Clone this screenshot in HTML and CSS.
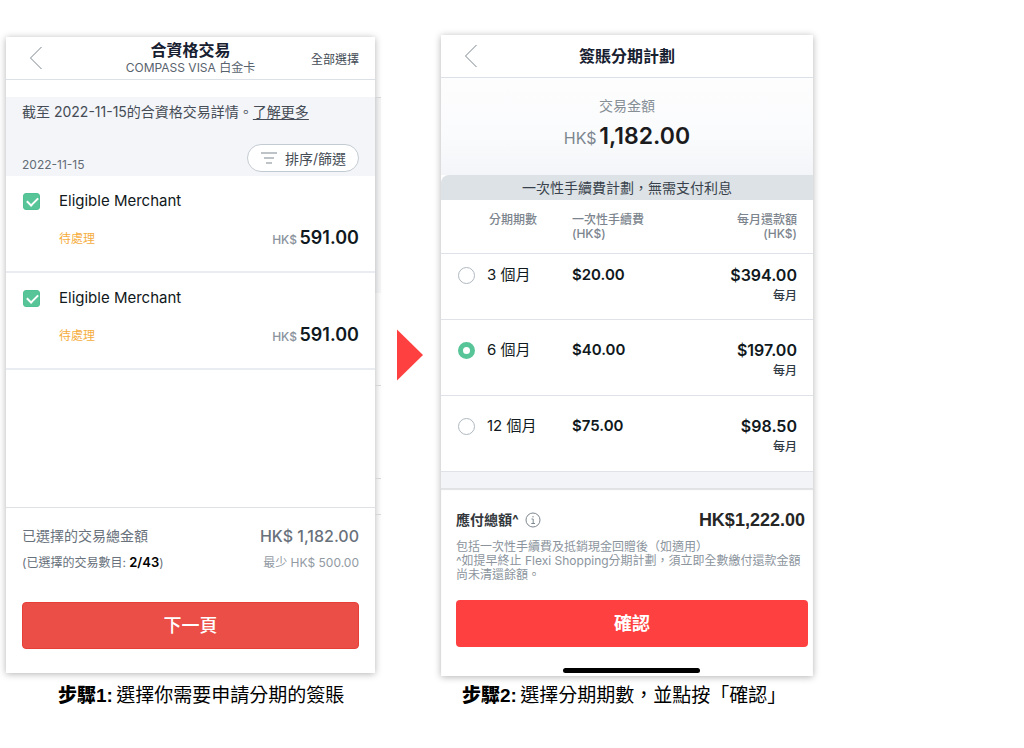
FILE: index.html
```
<!DOCTYPE html>
<html lang="zh-Hant">
<head>
  <meta charset="UTF-8">
  <meta name="viewport" content="width=device-width, initial-scale=1">
  <title>簽賬分期計劃</title>
  <link rel="stylesheet" href="styles.css">
</head>
<body>

<main class="steps">
  <figure class="step step-one">
    <section class="phone">
      <header class="topbar">
        <button class="back" type="button" aria-label="返回">
          <svg width="14" height="24" viewBox="0 0 14 24"><path d="M12.5 1 1.5 12l11 11" /></svg>
        </button>
        <div class="topbar-title">
          <h1>合資格交易</h1>
          <p>COMPASS VISA 白金卡</p>
        </div>
        <button class="select-all" type="button">全部選擇</button>
      </header>

      <div class="notice">
        <p>截至 2022-11-15的合資格交易詳情。<a href="#">了解更多</a></p>
        <div class="notice-row">
          <span class="date">2022-11-15</span>
          <button class="filter" type="button">
            <svg width="16" height="12" viewBox="0 0 16 12"><path d="M0 1h16M3 6h10M5 11h6" /></svg>
            排序/篩選
          </button>
        </div>
      </div>

      <ul class="merchants">
        <li>
          <input type="checkbox" id="m1" checked>
          <label for="m1">Eligible Merchant</label>
          <span class="status">待處理</span>
          <span class="amount"><small>HK$</small> 591.00</span>
        </li>
        <li>
          <input type="checkbox" id="m2" checked>
          <label for="m2">Eligible Merchant</label>
          <span class="status">待處理</span>
          <span class="amount"><small>HK$</small> 591.00</span>
        </li>
      </ul>

      <footer class="summary">
        <div class="summary-row total">
          <span>已選擇的交易總金額</span>
          <span class="total-value">HK$ 1,182.00</span>
        </div>
        <div class="summary-row minor">
          <span>(已選擇的交易數目: <b>2/43</b>)</span>
          <span class="minimum">最少 HK$ 500.00</span>
        </div>
        <button class="primary" type="button">下一頁</button>
      </footer>
    </section>
    <figcaption><b>步驟1:</b> 選擇你需要申請分期的簽賬</figcaption>
  </figure>

  <svg class="arrow" width="26" height="52" viewBox="0 0 26 52"><path d="M0 0.500 26 26 0 51.500z" /></svg>

  <figure class="step step-two">
    <section class="phone">
      <header class="topbar">
        <button class="back" type="button" aria-label="返回">
          <svg width="14" height="24" viewBox="0 0 14 24"><path d="M12.5 1 1.5 12l11 11" /></svg>
        </button>
        <div class="topbar-title">
          <h1>簽賬分期計劃</h1>
        </div>
      </header>

      <div class="transaction">
        <p>交易金額</p>
        <p class="transaction-value"><small>HK$</small> 1,182.00</p>
      </div>
      <p class="banner">一次性手續費計劃，無需支付利息</p>

      <table class="plans">
        <thead>
          <tr>
            <th class="term">分期期數</th>
            <th class="fee">一次性手續費<br>(HK$)</th>
            <th class="monthly">每月還款額<br>(HK$)</th>
          </tr>
        </thead>
        <tbody>
          <tr>
            <td><label><input type="radio" name="term">3 個月</label></td>
            <td class="money">$20.00</td>
            <td class="money">$394.00<small>每月</small></td>
          </tr>
          <tr>
            <td><label><input type="radio" name="term" checked>6 個月</label></td>
            <td class="money">$40.00</td>
            <td class="money">$197.00<small>每月</small></td>
          </tr>
          <tr>
            <td><label><input type="radio" name="term">12 個月</label></td>
            <td class="money">$75.00</td>
            <td class="money">$98.50<small>每月</small></td>
          </tr>
        </tbody>
      </table>

      <footer class="payable">
        <div class="payable-row">
          <span class="payable-label">應付總額^
            <svg width="16" height="16" viewBox="0 0 16 16"><circle cx="8" cy="8" r="7" /><path d="M6.500 7h1.700v4.500M6.300 11.500h3.700M8 4v1.400" /></svg>
          </span>
          <strong>HK$1,222.00</strong>
        </div>
        <p class="terms">包括一次性手續費及抵銷現金回贈後（如適用）<br>^如提早終止 Flexi Shopping分期計劃，須立即全數繳付還款金額<br>尚未清還餘額。</p>
        <button class="primary" type="button">確認</button>
        <div class="home-bar"></div>
      </footer>
    </section>
    <figcaption><b>步驟2:</b> 選擇分期期數，並點按「確認」</figcaption>
  </figure>
</main>

</body>
</html>
```
FILE: styles.css
```
* {
  box-sizing: border-box;
}
body {
  margin: 0;
  background: #fff;
  color: #101820;
  font-family: Inter, "Noto Sans CJK TC", sans-serif;
}
h1, p, ul, figure {
  margin: 0;
  padding: 0;
}
button {
  padding: 0;
  border: none;
  background: none;
  font-family: inherit;
  cursor: pointer;
}
svg {
  fill: none;
  stroke: #7d8790;
}

.steps {
  display: grid;
  grid-template-columns: minmax(0, 369fr) 66px minmax(0, 372fr);
  width: 79%;
  min-width: 780px;
  margin-left: 6px;
  padding: 35px 2px 0 0;
}
.step {
  display: flex;
  flex-direction: column;
}
.step-one {
  padding-top: 2px;
}
.phone {
  position: relative;
  flex: 1;
  display: flex;
  flex-direction: column;
  background: #fff;
  box-shadow: 0 1px 7px rgba(0, 0, 0, 0.3);
}
/* edge of the screen lying behind the first one */
.step-one .phone::after {
  content: "";
  position: absolute;
  left: 100%;
  top: 60px;
  width: 6px;
  height: 416px;
  border-top: 1px solid #d5d6d8;
  border-bottom: 1px solid #d5d6d8;
  background: linear-gradient(rgba(40, 50, 80, 0.04) 195px, transparent 195px 287px, #d5d6d8 287px 288px, transparent 288px 380px, #d5d6d8 380px 381px, transparent 381px);
}
figcaption {
  height: 40px;
  font-size: 19px;
  line-height: 40px;
  color: #000;
  white-space: nowrap;
}
figcaption b {
  margin-right: -2px;
  font-family: "Liberation Sans", "Noto Sans CJK TC", sans-serif;
  font-weight: 900;
}
.step-one figcaption {
  height: 43px;
  line-height: 46px;
  padding-left: 52px;
}
.step-two figcaption {
  padding-left: 21px;
}
.arrow {
  align-self: center;
  margin: 0 0 42px 22px;
  stroke: none;
  fill: #ff4040;
}

/* top bar */
.topbar {
  display: grid;
  grid-template-columns: 64px 1fr 64px;
  align-items: center;
  height: 43px;
  border-bottom: 1px solid #dce1e8;
}
.back {
  justify-self: start;
  margin-left: 23px;
  line-height: 0;
}
.topbar-title {
  text-align: center;
}
.topbar h1 {
  font-size: 16px;
  line-height: 19px;
  font-weight: 700;
  color: #172030;
}
.topbar p {
  font-size: 12px;
  line-height: 15px;
  color: #59636e;
}
.select-all {
  justify-self: end;
  margin-right: 16px;
  font-size: 12px;
  color: #414a54;
  white-space: nowrap;
}

/* eligible transactions */
.notice {
  margin-top: 17px;
  padding: 4px 16px;
  background: #f4f5f9;
  font-size: 14px;
  line-height: 22px;
  color: #454c55;
}
.notice a {
  color: inherit;
  text-underline-offset: 2px;
}
.notice-row {
  display: flex;
  justify-content: space-between;
  align-items: flex-end;
  margin-top: 21px;
}
.date {
  font-size: 12px;
  line-height: 14px;
  color: #626b75;
}
.filter {
  display: flex;
  align-items: center;
  gap: 8px;
  height: 28px;
  padding: 0 12px 0 13px;
  border: 1px solid #c3cbd2;
  border-radius: 14px;
  background: #fff;
  font-size: 14px;
  color: #454c55;
}
.merchants {
  list-style: none;
  margin-bottom: 120px;
}
.merchants li {
  display: grid;
  grid-template-columns: 37px 1fr auto;
  row-gap: 15px;
  height: 97px;
  padding: 14px 16px;
  align-content: start;
  align-items: center;
  border-bottom: 2px solid #e9ecf0;
}
.merchants label {
  grid-column: 2 / 4;
  font-size: 15px;
  line-height: 22px;
}
.merchants input {
  appearance: none;
  width: 17px;
  height: 17px;
  margin: 0 0 0 1px;
  border: 1px solid #b5bec6;
  border-radius: 3px;
}
.merchants input:checked {
  position: relative;
  border-color: #4fc193;
  background: #58c598;
}
.merchants input:checked::after {
  content: "";
  position: absolute;
  left: 3px;
  top: 3px;
  width: 9px;
  height: 5px;
  border-left: 2px solid #fff;
  border-bottom: 2px solid #fff;
  transform: rotate(-45deg);
}
.status {
  grid-column: 2;
  font-size: 12px;
  line-height: 22px;
  color: #f5ad3d;
}
.amount {
  font-size: 18px;
  line-height: 22px;
  font-weight: 600;
}
.amount small {
  margin-right: -2px;
  font-size: 12px;
  font-weight: 500;
  color: #8b939c;
}
.summary {
  margin-top: auto;
  padding: 17px 16px 24px;
  border-top: 1px solid #dfe1e4;
}
.summary-row {
  display: flex;
  justify-content: space-between;
  align-items: center;
  color: #68717b;
}
.total {
  font-size: 14px;
  line-height: 22px;
}
.total-value {
  font-size: 16px;
  font-weight: 500;
}
.minor {
  margin-top: 4px;
  font-size: 12px;
  line-height: 22px;
}
.minor b {
  font-size: 13px;
  font-weight: 600;
  color: #000;
}
.minimum {
  color: #929aa3;
}
.primary {
  display: block;
  width: 100%;
  height: 47px;
  border-radius: 4px;
  color: #fff;
  font-size: 18px;
  line-height: 24px;
}
.summary .primary {
  margin-top: 28px;
  border: 1px solid #e63f38;
  background: #eb4e47;
  font-weight: 500;
}

/* instalment plans */
.transaction {
  padding: 17px 0;
  height: 97px;
  text-align: center;
  font-size: 14px;
  line-height: 22px;
  color: #868e96;
  background: linear-gradient(#fdfdfe, #fafbfc 60%, #f3f5f9);
}
.transaction-value {
  margin-top: 4px;
  font-size: 23px;
  line-height: 30px;
  font-weight: 600;
  color: #1b1b1d;
}
.transaction small {
  margin-right: -3px;
  font-size: 16px;
  font-weight: 400;
  color: #7d8790;
}
.banner {
  height: 25px;
  border-radius: 8px 0 0 0;
  background: #dde2e6;
  font-size: 14px;
  line-height: 25px;
  text-align: center;
  color: #39424c;
}
.plans {
  width: 100%;
  border-spacing: 0;
  table-layout: fixed;
}
.plans th,
.plans td {
  padding: 0;
  vertical-align: top;
  text-align: left;
  border-bottom: 1px solid #dfe2e8;
}
.plans th {
  height: 54px;
  padding-top: 13px;
  font-size: 12px;
  line-height: 14px;
  font-weight: 500;
  color: #7c858e;
}
.plans .term {
  width: 131px;
  padding-left: 48px;
}
.plans th:last-child,
.plans td:last-child {
  padding-right: 16px;
  text-align: right;
}
.plans td {
  height: 76px;
  padding-top: 19px;
  font-size: 15px;
  line-height: 22px;
}
.plans tbody tr:first-child td {
  height: 66px;
  padding-top: 10px;
}
.plans td:last-child {
  font-size: 16px;
}
.plans label {
  display: flex;
  align-items: center;
  gap: 12px;
  padding-left: 17px;
}
.plans input {
  appearance: none;
  width: 17px;
  height: 17px;
  margin: 0;
  border: 1px solid #afb8c0;
  border-radius: 50%;
}
.plans input:checked {
  border: 5px solid #58c598;
}
.plans .money {
  font-weight: 600;
}
.money small {
  display: block;
  font-size: 12px;
  line-height: 20px;
  font-weight: 500;
  color: #303a44;
}
.payable {
  border-top: 16px solid #f3f4f7;
  padding: 20px 5px 3px 15px;
  box-shadow: inset 0 2px 1px #e0e2e4;
}
.payable-row {
  display: flex;
  justify-content: space-between;
  align-items: center;
  padding-right: 3px;
}
.payable-label {
  display: flex;
  align-items: center;
  gap: 6px;
  font-size: 14px;
  line-height: 24px;
  font-weight: 700;
  color: #33383d;
}
.payable strong {
  font-family: "Liberation Sans", sans-serif;
  font-size: 18px;
  line-height: 20px;
  color: #262626;
}
.terms {
  margin-top: 8px;
  font-size: 12px;
  line-height: 14px;
  color: #8b949d;
  white-space: nowrap;
}
.payable .primary {
  margin-top: 18px;
  background: #ff4040;
  font-weight: 700;
}
.home-bar {
  width: 137px;
  height: 5px;
  margin: 21px auto 0;
  border-radius: 3px;
  background: #000;
}
```
